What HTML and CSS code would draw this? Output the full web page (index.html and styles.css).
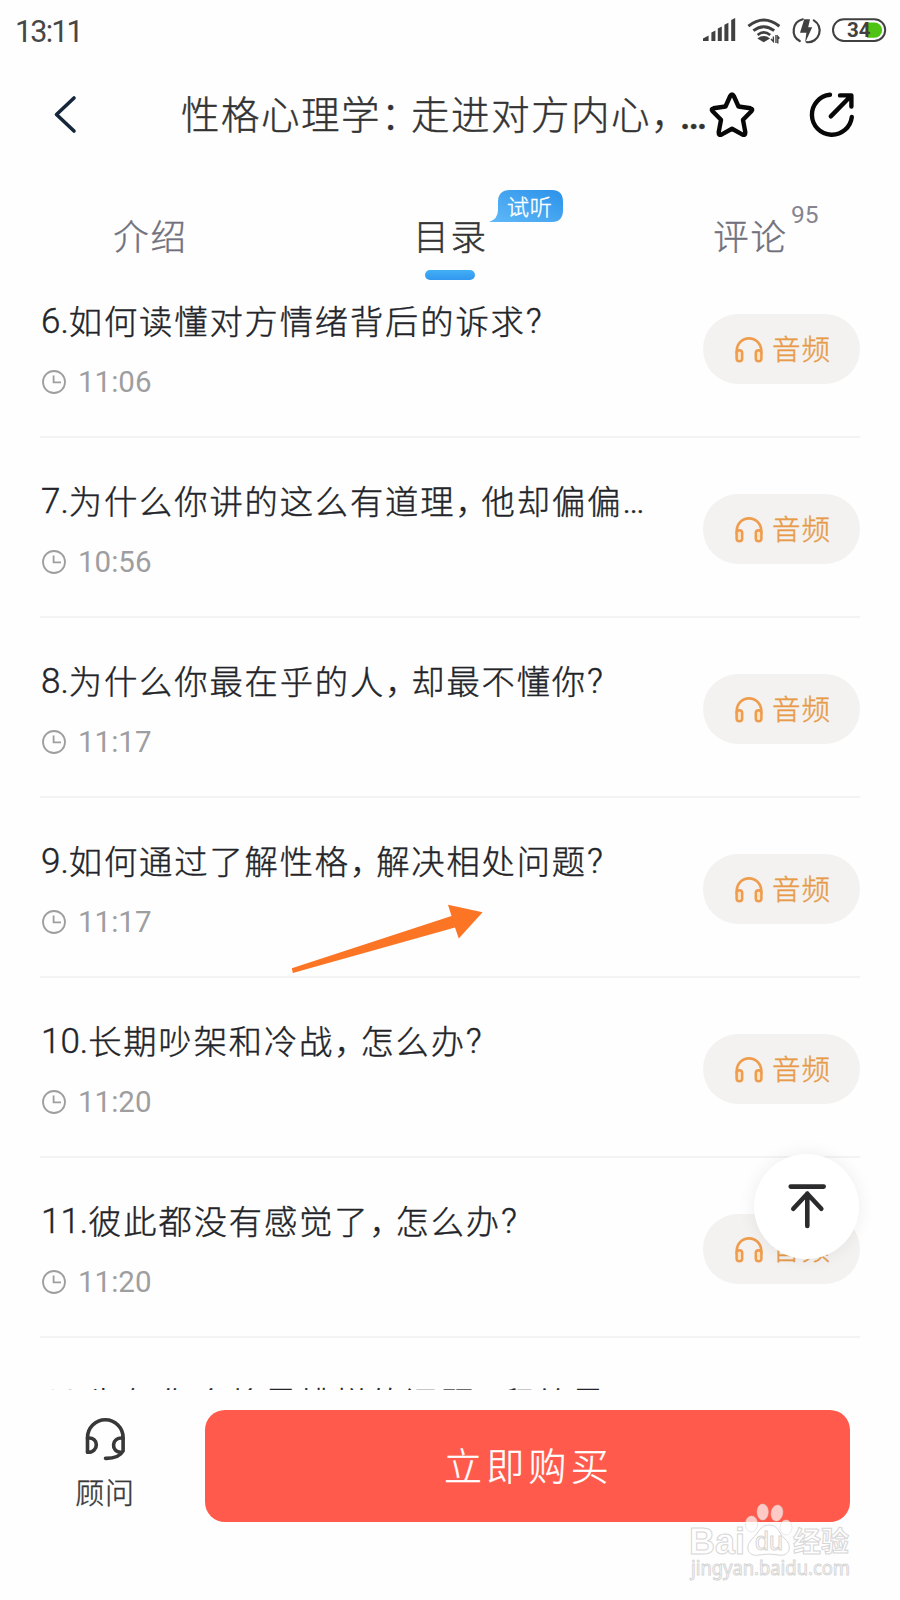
FILE: index.html
```html
<!DOCTYPE html>
<html lang="zh-CN">
<head>
<meta charset="utf-8">
<title>性格心理学</title>
<link rel="stylesheet" href="styles.css">
</head>
<body>
<svg class="defs" width="0" height="0">
  <symbol id="clock" viewBox="0 0 26 26"><circle cx="13" cy="13" r="11" fill="none" stroke="currentColor" stroke-width="1.8"/><path d="M12.6 6.5V13.4H20" fill="none" stroke="currentColor" stroke-width="1.8"/></symbol>
  <symbol id="phones" viewBox="0 0 30 28"><path d="M2.8 18V14.5A12.2 12.2 0 0 1 27.2 14.5V18" fill="none" stroke="currentColor" stroke-width="2.7"/><rect x="2.6" y="14.2" width="5.6" height="11" rx="2.8" fill="#fbe3c4" stroke="currentColor" stroke-width="2.5"/><rect x="21.8" y="14.2" width="5.6" height="11" rx="2.8" fill="#fbe3c4" stroke="currentColor" stroke-width="2.5"/></symbol>
</svg>
<div class="page">
  <header class="status">
    <span class="time">13:11</span>
    <svg class="status-icons" width="190" height="40" viewBox="0 0 190 40">
      <g fill="#404040">
        <path d="M3 31V28.6L8.6 25.4V31zM11.4 31V22.6L15.4 20.6V31zM17.8 31V18.6L21.8 16.6V31zM24.4 31V14.8L28.4 12.8V31zM31.2 31V10L35.2 8V31z"/>
        <path d="M57.3 28.4L60.5 26.6Q63.7 25.6 67 26.6L70 28.4L63.7 32.2z"/>
        <path d="M73.4 26.5V31.5L71 29M76 25V33M79.4 28.5L77.8 26.5V33.5" fill="none" stroke="#404040" stroke-width="1.4"/>
      </g>
      <g fill="none" stroke="#404040" stroke-width="3">
        <path d="M48.4 16.2Q63.7 3.8 79.4 16.2"/><path d="M53.4 20.6Q63.7 12.8 74.2 20.6"/><path d="M57.6 25Q63.7 19.8 70.2 25" stroke-width="2.6"/>
      </g>
      <path d="M103.6 9.3A11.7 11.7 0 0 0 100.6 31M114.6 10.4A11.7 11.7 0 0 1 107.8 32.2" transform="translate(-.8 0)" fill="none" stroke="#404040" stroke-width="2.2" stroke-linecap="round" stroke-linejoin="round"/>
      <path d="M104.2 9.2H110L108.2 17.2H112.2L105 33L106.4 22.8H100z" fill="#404040"/>
      <rect x="133" y="9.2" width="52.2" height="21.8" rx="10.9" fill="#fff" stroke="#404040" stroke-width="2"/>
      <path d="M167 12.4H174.5A7.7 7.7 0 0 1 174.5 27.8H167z" fill="#4fc314"/>
      <text class="battery-text" x="147" y="27">34</text>
    </svg>
  </header>

  <nav class="topbar">
    <svg class="back" width="30" height="50" viewBox="0 0 30 50"><path d="M24 8L6.5 24.5L24 41" fill="none" stroke="#16263a" stroke-width="3.6" stroke-linecap="round" stroke-linejoin="round"/></svg>
    <h1 class="heading">性格心理学<span class="colon">：</span>走进对方内心<span class="comma">，</span><span class="dots">…</span></h1>
    <svg class="star" width="50" height="50" viewBox="0 0 50 50"><path d="M25 4.4Q26 4.4 26.8 6L31.5 16.5L43.5 18.3Q46.4 19 44.4 21.2L36 29.8L38.3 42.2Q38.4 45.6 35.6 44.6L25 38.8L14.4 44.6Q11.6 45.6 11.7 42.2L14 29.8L5.6 21.2Q3.6 19 6.5 18.3L18.5 16.5L23.2 6Q24 4.4 25 4.4z" fill="none" stroke="#080808" stroke-width="4.4" stroke-linejoin="round"/></svg>
    <svg class="share" width="50" height="50" viewBox="0 0 50 50"><path d="M24 4.8A20 20 0 1 0 45.8 27" fill="none" stroke="#080808" stroke-width="4.4" stroke-linecap="round"/><path d="M34 5.4H45.4V16.5M44.8 6L24.8 26.4" fill="none" stroke="#080808" stroke-width="4.4" stroke-linecap="round" stroke-linejoin="round"/></svg>
  </nav>

  <div class="tabs">
    <div class="tab">介绍</div>
    <div class="tab active">目录
      <span class="bubble"><svg width="75" height="34" viewBox="0 0 75 34"><defs><linearGradient id="g" x1="0" y1="1" x2="1" y2="0"><stop offset="0" stop-color="#60b9f8"/><stop offset="1" stop-color="#2b92e9"/></linearGradient></defs><path d="M0 32Q9 29 9 20V12Q9 0 21 0H63Q74 0 74 12V20Q74 32 63 32z" fill="url(#g)"/></svg><b>试听</b></span>
    </div>
    <div class="tab">评论<sup class="count">95</sup></div>
  </div>

  <main class="list">
    <div class="rows">
      <article class="row"><div class="info"><h2>6.<i>如何读懂对方情绪背后的诉求</i>?</h2><p><svg class="clk"><use href="#clock"/></svg>11:06</p></div><button class="pill"><svg class="hp"><use href="#phones"/></svg>音频</button></article>
      <article class="row"><div class="info"><h2>7.<i>为什么你讲的这么有道理<em>，</em>他却偏偏</i>…</h2><p><svg class="clk"><use href="#clock"/></svg>10:56</p></div><button class="pill"><svg class="hp"><use href="#phones"/></svg>音频</button></article>
      <article class="row"><div class="info"><h2>8.<i>为什么你最在乎的人<em>，</em>却最不懂你</i>?</h2><p><svg class="clk"><use href="#clock"/></svg>11:17</p></div><button class="pill"><svg class="hp"><use href="#phones"/></svg>音频</button></article>
      <article class="row"><div class="info"><h2>9.<i>如何通过了解性格<em>，</em>解决相处问题</i>?</h2><p><svg class="clk"><use href="#clock"/></svg>11:17</p></div><button class="pill"><svg class="hp"><use href="#phones"/></svg>音频</button></article>
      <article class="row"><div class="info"><h2>10.<i>长期吵架和冷战<em>，</em>怎么办</i>?</h2><p><svg class="clk"><use href="#clock"/></svg>11:20</p></div><button class="pill"><svg class="hp"><use href="#phones"/></svg>音频</button></article>
      <article class="row"><div class="info"><h2>11.<i>彼此都没有感觉了<em>，</em>怎么办</i>?</h2><p><svg class="clk"><use href="#clock"/></svg>11:20</p></div><button class="pill"><svg class="hp"><use href="#phones"/></svg>音频</button></article>
      <article class="row"><div class="info"><h2>12.<i>为何你会将最糟糕的问题<em>，</em>留给最</i></h2></div></article>
    </div>
  </main>

  <footer class="bottom">
    <div class="advisor">
      <svg width="44" height="46" viewBox="0 0 44 46"><g fill="none" stroke="#383838" stroke-width="3.6" stroke-linecap="round" stroke-linejoin="round"><path d="M4.5 36V21.5A17.8 17.8 0 0 1 40.1 21.5V35Q36 42.6 22.5 42.4"/><path d="M4.5 22.2C16 20.5 16.5 36.5 4.5 36.3"/><path d="M40.1 22.2C28 20.5 27.5 36.5 38 36.3"/></g></svg>
      <span>顾问</span>
    </div>
    <button class="buy">立即购买</button>
  </footer>

  <svg class="arrow" width="194" height="70" viewBox="0 0 194 70"><path d="M1.8 64.2L161.5 12L158 .8L192.6 8.2L168.8 34.4L165 23.4L2.8 69z" fill="#fb7525"/></svg>

  <button class="totop"><svg width="40" height="48" viewBox="0 0 40 48"><path d="M3.7 4.6H36.7M20.3 44V11.5M6.3 26.8L20.3 11.7L34.3 26.8" fill="none" stroke="#2b2b2d" stroke-width="4.6" stroke-linecap="round" stroke-linejoin="round"/></svg></button>

  <svg class="mark" width="180" height="90" viewBox="0 0 180 90">
    <g fill="#fff" fill-opacity=".68" stroke="#d6d6d6" stroke-width="1">
      <g stroke-opacity=".5"><ellipse cx="71.5" cy="24" rx="6" ry="8"/><ellipse cx="82.7" cy="12" rx="5.6" ry="8"/><ellipse cx="97" cy="13" rx="5.8" ry="8" transform="rotate(12 97 13)"/><ellipse cx="106" cy="27.5" rx="6" ry="7.5"/></g>
      <path d="M89 25C80 25 79 33 72 39C63 49 70 57 79 55Q89 53 99 55C109 57 113 46 105 39C98 33 99 25 89 25z"/>
      <text class="mark-main" x="9" y="54" textLength="56" lengthAdjust="spacingAndGlyphs">Bai</text>
      <text class="mark-du" x="75" y="50">du</text>
      <text class="mark-cn" x="113" y="52" textLength="56">经验</text>
      <text class="mark-url" x="11" y="75" textLength="159" lengthAdjust="spacingAndGlyphs">jingyan.baidu.com</text>
    </g>
  </svg>
</div>
</body>
</html>
```
FILE: styles.css
```css
* { box-sizing: border-box; margin: 0; padding: 0; }
body { background: #fefefe; font-family: Roboto, "Noto Sans CJK SC", sans-serif; font-weight: 300; }
.defs { position: absolute; }
.page { position: relative; width: 900px; height: 1600px; overflow: hidden; display: flex; flex-direction: column; }
button { border: 0; background: none; font: inherit; }
h1, h2, b, i, em { font-weight: inherit; font-style: normal; }
.heading, .tab, .info h2, .pill, .advisor, .buy { -webkit-text-stroke: .4px currentColor; }

.status { height: 62px; padding: 10px 0 0 15px; display: flex; justify-content: space-between; }
.time { margin-top: 1px; font-size: 30.5px; line-height: 42px; letter-spacing: -1.8px; font-weight: 400; color: #474747; }
.status-icons { margin-right: 10px; }
.battery-text { font: 700 20.5px Roboto, sans-serif; fill: #404040; }

.topbar { height: 106px; padding-left: 50px; display: flex; align-items: center; }
.heading { width: 526px; margin: -3px 0 0 101px; font-family: "Noto Sans CJK SC", sans-serif; font-size: 38.5px; line-height: 60px; letter-spacing: 1.5px; color: #333; white-space: nowrap; }
.colon, .comma, .info em { font-feature-settings: "halt"; }
.colon { letter-spacing: 10.8px; }
.comma { letter-spacing: 9.5px; }
.dots { font-family: Roboto, sans-serif; font-weight: 500; letter-spacing: 0; }
.star { flex: none; }
.share { flex: none; margin-left: 49px; }

.tabs { height: 122px; padding: 39px 0 0; display: flex; }
.tab { width: 300px; padding: 1px 0 0 1px; text-align: center; font-size: 35.5px; line-height: 60px; letter-spacing: 1.7px; color: #71717d; position: relative; white-space: nowrap; }
.active { color: #333; }
.active::after { content: ""; position: absolute; left: 125px; top: 63px; width: 50px; height: 10px; border-radius: 5px; background: linear-gradient(#41b0f6, #3297ee); }
.bubble { position: absolute; left: 189px; top: -17px; width: 75px; height: 34px; }
.bubble svg { display: block; }
.bubble b { position: absolute; left: 18px; top: 1px; font-size: 22px; line-height: 33px; letter-spacing: .8px; color: #fff; }
.count { position: absolute; left: 191px; top: -22px; font-size: 24.5px; font-weight: 400; letter-spacing: 0; color: #858591; -webkit-text-stroke: 0; }

.list { height: 1100px; overflow: hidden; }
.rows { margin: -32px 40px 0; }
.row { height: 180px; border-bottom: 2px solid #f3f3f3; display: flex; justify-content: space-between; padding: 39px 0 0; }
.row:last-child { padding-top: 41px; }
.info h2 { height: 50px; font-size: 35px; font-weight: 300; line-height: 50px; color: #222429; white-space: nowrap; padding-left: 1px; }
.info i { font-size: 33.3px; letter-spacing: 1.85px; vertical-align: -1px; }
.info em { letter-spacing: 9.5px; }
.info p { margin-top: 15px; display: flex; align-items: center; font-size: 29.5px; font-weight: 400; line-height: 40px; color: #9e9ea1; }
.clk { width: 26px; height: 26px; margin: 0 11px 1px 1px; }
.pill { margin-top: 17px; width: 157px; height: 70px; border-radius: 35px; background: #f3f2f1; color: #e79b49; font-size: 28.5px; line-height: 42px; letter-spacing: .9px; display: flex; align-items: center; padding: 4px 0 0 31px; }
.hp { width: 30px; height: 28px; margin: 0 8px 3px 0; color: #ee9c4e; }

.bottom { height: 210px; display: flex; align-items: flex-start; background: #fefefe; }
.advisor { width: 205px; padding: 26px 0 0 5px; display: flex; flex-direction: column; align-items: center; font-size: 29px; line-height: 40px; letter-spacing: .8px; color: #383838; }
.advisor span { margin-top: 12px; }
.buy { width: 645px; height: 112px; margin-top: 20px; padding: 0 0 5px 2px; border-radius: 20px; background: #ff5a4c; color: #fff; font-size: 38px; letter-spacing: 4.2px; }

.arrow { position: absolute; left: 290px; top: 904px; }
.totop { position: absolute; left: 754px; top: 1154px; width: 105px; height: 105px; border-radius: 50%; background: #fff; box-shadow: 0 0 18px rgba(0,0,0,.07); display: flex; align-items: center; justify-content: center; }
.totop svg { margin-top: -2px; }
.mark { position: absolute; left: 680px; top: 1500px; }
.mark-main { font: 700 37px "Liberation Sans", sans-serif; }
.mark-du { font: 400 25px "Liberation Sans", sans-serif; }
.mark-cn { font: 700 28px "Noto Sans CJK SC", sans-serif; }
.mark-url { font: 400 20px "Noto Sans", sans-serif; }
```
